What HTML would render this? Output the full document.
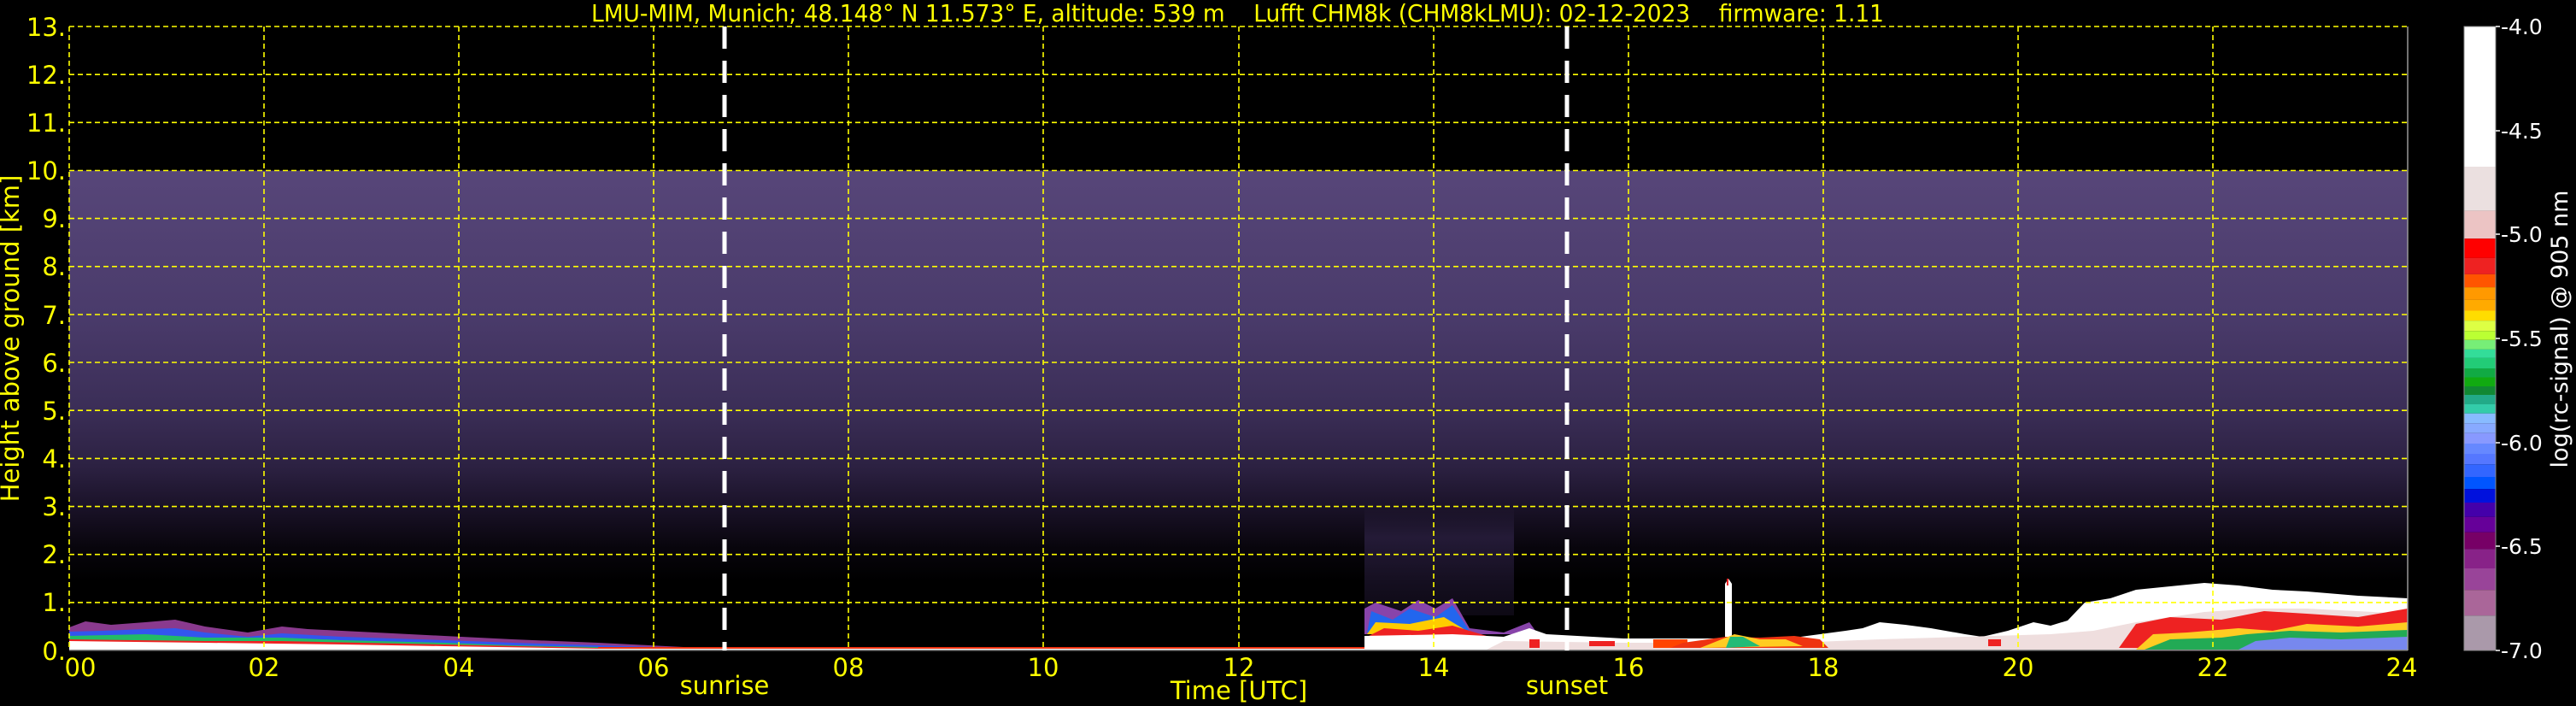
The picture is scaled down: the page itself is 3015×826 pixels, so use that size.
<!DOCTYPE html>
<html><head><meta charset="utf-8"><style>
html,body{margin:0;padding:0;background:#000;width:3015px;height:826px;overflow:hidden}
svg{display:block}
text{font-family:"DejaVu Sans","Liberation Sans",sans-serif}
</style></head><body>
<svg width="3015" height="826" viewBox="0 0 3015 826" xmlns="http://www.w3.org/2000/svg">
<defs>
<linearGradient id="ng" x1="0" y1="199.5" x2="0" y2="680" gradientUnits="userSpaceOnUse">
<stop offset="0" stop-color="#574679"/>
<stop offset="0.35" stop-color="#4a3b6b"/>
<stop offset="0.58" stop-color="#3b2e57"/>
<stop offset="0.72" stop-color="#2c2142"/>
<stop offset="0.82" stop-color="#1a1228"/>
<stop offset="0.92" stop-color="#08050c"/>
<stop offset="1" stop-color="#000"/>
</linearGradient>
<linearGradient id="ng2" x1="0" y1="590" x2="0" y2="720" gradientUnits="userSpaceOnUse">
<stop offset="0" stop-color="#2c2142" stop-opacity="0"/>
<stop offset="0.3" stop-color="#2a1f40" stop-opacity="0.8"/>
<stop offset="1" stop-color="#160f22" stop-opacity="0.6"/>
</linearGradient>
</defs>

<rect x="81" y="199.5" width="2737" height="480" fill="url(#ng)"/>
<rect x="1597" y="590" width="175" height="130" fill="url(#ng2)"/>

<!-- morning aerosol layers -->
<polygon fill="#8a3a8e" points="81,734 100,727 130,731 170,728 205,725 240,733 290,740 330,733 360,736 400,738 440,740 520,744 600,748 700,752 800,757 900,759 900,761 81,761"/>
<polygon fill="#3355ee" points="81,739 120,738 170,736 205,735 240,740 290,745 330,741 400,745 520,749 600,752 700,755 800,758 900,760 900,761 81,761"/>
<polygon fill="#22bb66" points="81,744 170,742 240,746 330,746 400,749 520,752 600,755 700,757 800,759 900,760 900,761 81,761"/>
<polygon fill="#ee2222" points="81,748 240,750 330,750 520,754 700,758 900,759.5 900,761 81,761"/>
<polygon fill="#ffffff" points="81,750 240,752 400,754 520,756 700,759 900,760.5 900,761 81,761"/>
<rect x="700" y="757" width="920" height="3" fill="#ee3311"/>
<rect x="700" y="759" width="920" height="2" fill="#ffffff"/>

<!-- afternoon spikes -->
<polygon fill="#8844aa" points="1597,742 1597,712 1610,705 1640,715 1660,702 1680,712 1700,700 1720,735 1760,740 1790,728 1800,742"/>
<polygon fill="#2266ee" points="1600,740 1605,715 1630,725 1650,712 1680,722 1700,708 1720,738"/>
<polygon fill="#ffcc00" points="1600,742 1610,728 1650,730 1690,722 1720,740"/>
<polygon fill="#ee2222" points="1600,745 1620,735 1660,738 1700,732 1740,744"/>
<!-- white base + night layer -->
<polygon fill="#ffffff" points="1597,761 1597,744 1700,742 1760,745 1790,735 1810,742 1900,747 2000,747 2100,746 2130,742 2160,738 2180,735 2200,728 2230,731 2260,735 2300,742 2320,745 2350,738 2380,728 2400,732 2420,726 2440,705 2470,700 2500,690 2540,686 2580,682 2620,685 2660,690 2700,692 2760,697 2818,700 2818,761"/>
<polygon fill="#ffffff" points="2019,745 2019,683 2023,677 2027,683 2027,745"/>
<rect x="2021" y="677" width="2" height="8" fill="#ee2222"/>
<!-- pink -->
<polygon fill="#efdede" points="1740,760 1760,750 1900,752 2000,752 2100,752 2200,748 2300,745 2400,742 2450,738 2500,728 2540,722 2580,716 2640,712 2700,712 2818,718 2818,761"/>
<!-- red patches -->
<rect x="1790" y="748" width="12" height="10" fill="#ee2222"/>
<rect x="1860" y="750" width="30" height="6" fill="#ee2222"/>
<rect x="1935" y="748" width="40" height="10" fill="#ff4400"/>
<polygon fill="#ee3311" points="1955,758 1970,752 2020,745 2060,746 2100,744 2130,748 2140,758"/>
<polygon fill="#ffcc22" points="1990,758 2010,750 2030,742 2060,748 2090,748 2110,756"/>
<polygon fill="#22bb77" points="2020,758 2025,745 2040,745 2060,756"/>
<rect x="2327" y="748" width="15" height="8" fill="#ee2222"/>
<!-- late night colored -->
<polygon fill="#ee2222" points="2480,758 2500,730 2540,722 2600,725 2650,715 2700,718 2760,722 2818,712 2818,761"/>
<polygon fill="#ffcc22" points="2500,760 2520,742 2560,740 2620,735 2660,738 2700,730 2760,733 2818,728 2818,761"/>
<polygon fill="#22aa55" points="2510,760 2540,748 2600,746 2630,742 2680,738 2740,740 2818,737 2818,761"/>
<polygon fill="#7788ee" points="2620,760 2640,750 2680,746 2740,748 2818,745 2818,761"/>
<rect x="81" y="760" width="2737" height="1.5" fill="#888"/>

<!-- colorbar -->
<g>
<rect x="2884" y="31" width="37" height="164" fill="#ffffff"/>
<rect x="2884" y="195" width="37" height="51.6" fill="#ebe0e0"/>
<rect x="2884" y="246.6" width="37" height="32.6" fill="#ecc4c4"/>
<rect x="2884" y="279.2" width="37" height="22.7" fill="#ff0000"/>
<rect x="2884" y="301.9" width="37" height="19" fill="#ee2222"/>
<rect x="2884" y="320.9" width="37" height="15.2" fill="#ff5500"/>
<rect x="2884" y="336.1" width="37" height="14.8" fill="#ff9900"/>
<rect x="2884" y="350.9" width="37" height="12.6" fill="#ffaa00"/>
<rect x="2884" y="363.5" width="37" height="11.6" fill="#ffdd00"/>
<rect x="2884" y="375.1" width="37" height="12.1" fill="#ddff44"/>
<rect x="2884" y="387.2" width="37" height="10.6" fill="#bbff33"/>
<rect x="2884" y="397.8" width="37" height="11.1" fill="#77ee77"/>
<rect x="2884" y="408.9" width="37" height="10" fill="#33dd99"/>
<rect x="2884" y="418.9" width="37" height="12.1" fill="#22cc77"/>
<rect x="2884" y="431" width="37" height="10.5" fill="#11aa44"/>
<rect x="2884" y="441.5" width="37" height="10.5" fill="#11aa11"/>
<rect x="2884" y="452" width="37" height="10" fill="#118833"/>
<rect x="2884" y="462" width="37" height="11" fill="#22aa88"/>
<rect x="2884" y="473" width="37" height="10.7" fill="#33ccaa"/>
<rect x="2884" y="483.7" width="37" height="11.6" fill="#88bbff"/>
<rect x="2884" y="495.3" width="37" height="11.5" fill="#88aaff"/>
<rect x="2884" y="506.8" width="37" height="12.2" fill="#8899ff"/>
<rect x="2884" y="519" width="37" height="12" fill="#6688ff"/>
<rect x="2884" y="531" width="37" height="12.2" fill="#5577ff"/>
<rect x="2884" y="543.2" width="37" height="14.8" fill="#3366ff"/>
<rect x="2884" y="558" width="37" height="14.2" fill="#0055ff"/>
<rect x="2884" y="572.2" width="37" height="15.8" fill="#0011dd"/>
<rect x="2884" y="588" width="37" height="16.8" fill="#4400aa"/>
<rect x="2884" y="604.8" width="37" height="18" fill="#660099"/>
<rect x="2884" y="622.8" width="37" height="19.5" fill="#770066"/>
<rect x="2884" y="642.3" width="37" height="22.7" fill="#882288"/>
<rect x="2884" y="665" width="37" height="25.2" fill="#994499"/>
<rect x="2884" y="690.2" width="37" height="30" fill="#aa6699"/>
<rect x="2884" y="720.2" width="37" height="41" fill="#aa99aa"/>
<rect x="2884" y="31" width="37" height="730" fill="none" stroke="#888" stroke-width="1"/>
</g>
<g fill="#fff" font-size="25">
<text x="2927" y="40">-4.0</text>
<text x="2927" y="162">-4.5</text>
<text x="2927" y="283">-5.0</text>
<text x="2927" y="405">-5.5</text>
<text x="2927" y="527">-6.0</text>
<text x="2927" y="648">-6.5</text>
<text x="2927" y="770">-7.0</text>
</g>
<g stroke="#fff" stroke-width="1.5">
<line x1="2921" y1="31" x2="2926" y2="31"/><line x1="2921" y1="153" x2="2926" y2="153"/><line x1="2921" y1="274" x2="2926" y2="274"/><line x1="2921" y1="396" x2="2926" y2="396"/><line x1="2921" y1="518" x2="2926" y2="518"/><line x1="2921" y1="639" x2="2926" y2="639"/><line x1="2921" y1="761" x2="2926" y2="761"/>
</g>
<text transform="translate(3005,385) rotate(-90)" text-anchor="middle" fill="#fff" font-size="27">log(rc-signal) @ 905 nm</text>

<!-- grid -->
<g stroke="#ffff00" stroke-width="1.6" stroke-dasharray="6,4" fill="none">
<line x1="81" y1="31" x2="2818" y2="31"/>
<line x1="81" y1="87.2" x2="2818" y2="87.2"/>
<line x1="81" y1="143.3" x2="2818" y2="143.3"/>
<line x1="81" y1="199.5" x2="2818" y2="199.5"/>
<line x1="81" y1="255.6" x2="2818" y2="255.6"/>
<line x1="81" y1="311.8" x2="2818" y2="311.8"/>
<line x1="81" y1="368" x2="2818" y2="368"/>
<line x1="81" y1="424" x2="2818" y2="424"/>
<line x1="81" y1="480.2" x2="2818" y2="480.2"/>
<line x1="81" y1="536.4" x2="2818" y2="536.4"/>
<line x1="81" y1="592.6" x2="2818" y2="592.6"/>
<line x1="81" y1="648.7" x2="2818" y2="648.7"/>
<line x1="81" y1="704.9" x2="2818" y2="704.9"/>
<line x1="81" y1="31" x2="81" y2="761"/>
<line x1="309" y1="31" x2="309" y2="761"/>
<line x1="537" y1="31" x2="537" y2="761"/>
<line x1="765" y1="31" x2="765" y2="761"/>
<line x1="993" y1="31" x2="993" y2="761"/>
<line x1="1221" y1="31" x2="1221" y2="761"/>
<line x1="1450" y1="31" x2="1450" y2="761"/>
<line x1="1678" y1="31" x2="1678" y2="761"/>
<line x1="1906" y1="31" x2="1906" y2="761"/>
<line x1="2134" y1="31" x2="2134" y2="761"/>
<line x1="2362" y1="31" x2="2362" y2="761"/>
<line x1="2590" y1="31" x2="2590" y2="761"/>
</g>
<line x1="2818" y1="31" x2="2818" y2="761" stroke="#999" stroke-width="1.5"/>
<g stroke="#fff" stroke-width="5" stroke-dasharray="26,14">
<line x1="848" y1="31" x2="848" y2="761"/>
<line x1="1834" y1="31" x2="1834" y2="761"/>
</g>

<g fill="#ffff00" font-size="29" text-anchor="end">
<text x="77" y="42">13.</text><text x="77" y="98">12.</text><text x="77" y="154">11.</text><text x="77" y="210">10.</text>
<text x="77" y="266">9.</text><text x="77" y="322">8.</text><text x="77" y="379">7.</text><text x="77" y="435">6.</text>
<text x="77" y="491">5.</text><text x="77" y="547">4.</text><text x="77" y="603">3.</text><text x="77" y="659">2.</text>
<text x="77" y="715">1.</text><text x="77" y="772">0.</text>
</g>
<text transform="translate(22,396) rotate(-90)" text-anchor="middle" fill="#ffff00" font-size="29">Height above ground [km]</text>
<g fill="#ffff00" font-size="29" text-anchor="middle">
<text x="94" y="791">00</text><text x="309" y="791">02</text><text x="537" y="791">04</text><text x="765" y="791">06</text>
<text x="993" y="791">08</text><text x="1221" y="791">10</text><text x="1450" y="791">12</text><text x="1678" y="791">14</text>
<text x="1906" y="791">16</text><text x="2134" y="791">18</text><text x="2362" y="791">20</text><text x="2590" y="791">22</text>
<text x="2811" y="791">24</text>
<text x="848" y="812">sunrise</text>
<text x="1834" y="812">sunset</text>
<text x="1450" y="818">Time [UTC]</text>
</g>
<text x="692" y="25" fill="#ffff00" font-size="28" textLength="1513" lengthAdjust="spacingAndGlyphs" xml:space="preserve">LMU-MIM, Munich; 48.148° N 11.573° E, altitude: 539 m    Lufft CHM8k (CHM8kLMU): 02-12-2023    firmware: 1.11</text>
</svg>
</body></html>
